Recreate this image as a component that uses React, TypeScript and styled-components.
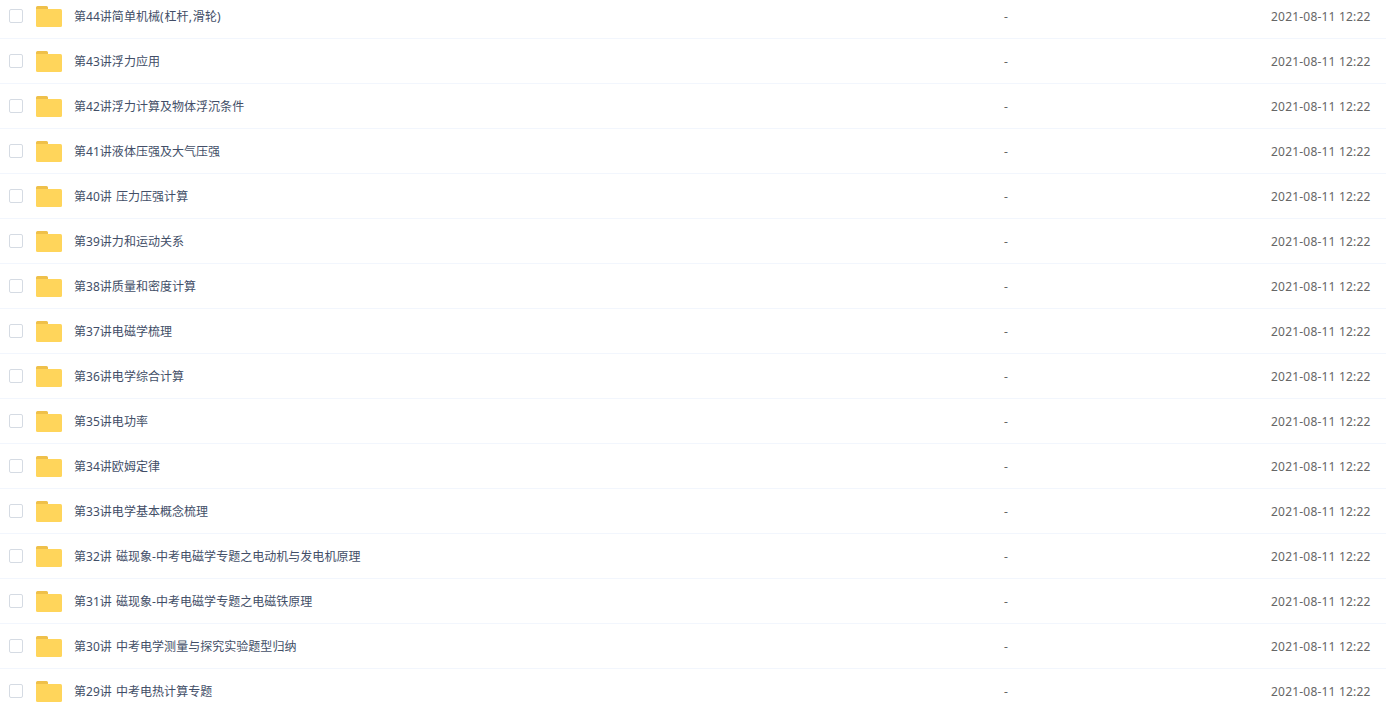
import styled, { createGlobalStyle } from 'styled-components';

const MODIFIED_AT = '2021-08-11 12:22';

const folders = [
  '第44讲简单机械(杠杆,滑轮)',
  '第43讲浮力应用',
  '第42讲浮力计算及物体浮沉条件',
  '第41讲液体压强及大气压强',
  '第40讲 压力压强计算',
  '第39讲力和运动关系',
  '第38讲质量和密度计算',
  '第37讲电磁学梳理',
  '第36讲电学综合计算',
  '第35讲电功率',
  '第34讲欧姆定律',
  '第33讲电学基本概念梳理',
  '第32讲 磁现象-中考电磁学专题之电动机与发电机原理',
  '第31讲 磁现象-中考电磁学专题之电磁铁原理',
  '第30讲 中考电学测量与探究实验题型归纳',
  '第29讲 中考电热计算专题'
];

const FolderIcon = () => (
  <svg width='26' height='21' viewBox='0 0 26 21'>
    <path d='M0 5V1.5A1.5 1.5 0 0 1 1.5 0h9A1.5 1.5 0 0 1 12 1.5V5z' fill='#efc04a' />
    <path
      d='M0 3h24.5A1.5 1.5 0 0 1 26 4.5v15a1.5 1.5 0 0 1-1.5 1.5h-23A1.5 1.5 0 0 1 0 19.5z'
      fill='#ffd55b'
    />
  </svg>
);

const App = () => {
  return (
    <Viewport>
      <GlobalStyle />
      <FileList>
        {folders.map((name) => (
          <FileRow key={name}>
            <Checkbox />
            <FolderIcon />
            <FileName>
              {name
                .split(/([(),])/)
                .map((part, i) =>
                  i % 2 ? <Punctuation key={i}>{part}</Punctuation> : part
                )}
            </FileName>
            <FileSize>-</FileSize>
            <ModifiedDate>{MODIFIED_AT}</ModifiedDate>
          </FileRow>
        ))}
      </FileList>
    </Viewport>
  );
};

const GlobalStyle = createGlobalStyle`
  body {
    margin: 0;
    background: #fff;
    font-family: 'Noto Sans', 'Noto Sans CJK SC', sans-serif;
    font-size: 12px;
  }
`;

const Viewport = styled.div`
  height: 706px;
  overflow: hidden;
`;

// the list is scrolled a little, so the first row is cut at the top
const FileList = styled.ul`
  margin: -6px 0 0;
  padding: 0;
  list-style: none;
`;

const FileRow = styled.li`
  display: flex;
  align-items: center;
  box-sizing: border-box;
  height: 45px;
  padding-left: 9px;
  border-bottom: 1px solid #f2f6fd;
  line-height: 18px;

  svg {
    flex: none;
    margin-right: 12px;
  }
`;

const Checkbox = styled.span`
  flex: none;
  box-sizing: border-box;
  width: 14px;
  height: 14px;
  margin-right: 13px;
  border: 1px solid #d5dbe3;
  border-radius: 2px;
`;

const FileName = styled.span`
  flex: 1;
  padding-top: 2px;
  color: #424e67;
  letter-spacing: 0.03px;
  word-spacing: 1px;
  white-space: nowrap;
`;

const Punctuation = styled.span`
  letter-spacing: 1px;
`;

const FileSize = styled.span`
  width: 267px;
  padding-top: 2px;
  color: #666;
`;

const ModifiedDate = styled.span`
  width: 115px;
  padding-top: 2px;
  color: #666;
  letter-spacing: 0.2px;
  white-space: nowrap;
`;

export default App;
